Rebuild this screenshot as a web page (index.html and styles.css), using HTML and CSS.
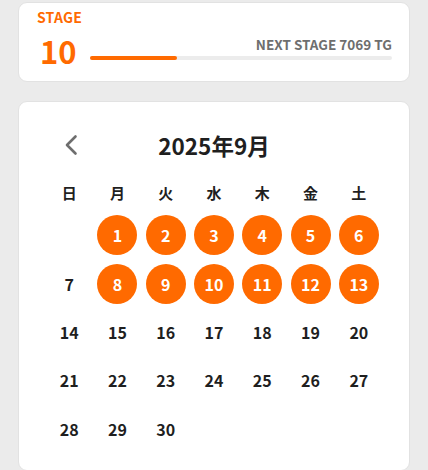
FILE: index.html
```html
<!DOCTYPE html>
<html lang="ja">
<head>
<meta charset="utf-8">
<link rel="stylesheet" href="styles.css">
</head>
<body>
<div class="page">
  <section class="card stage-card">
    <div class="stage-label">STAGE</div>
    <div class="stage-row">
      <div class="stage-num">10</div>
      <div class="stage-progress">
        <div class="next">NEXT STAGE 7069 TG</div>
        <div class="bar"><div class="fill" style="width:29%"></div></div>
      </div>
    </div>
  </section>
  <section class="card cal-card">
    <div class="cal-head">
      <button class="prev" aria-label="前の月">
        <svg width="14" height="22" viewBox="0 0 14 22"><polyline points="11.5,2.5 3,11 11.5,19.5" fill="none" stroke="#6e6e6e" stroke-width="2.6" stroke-linecap="round" stroke-linejoin="round"/></svg>
      </button>
      <div class="title">2025年9月</div>
    </div>
    <div class="grid week">
      <div>日</div><div>月</div><div>火</div><div>水</div><div>木</div><div>金</div><div>土</div>
    </div>
    <div class="grid days">
      <div class="day"></div>
      <div class="day on"><span>1</span></div>
      <div class="day on"><span>2</span></div>
      <div class="day on"><span>3</span></div>
      <div class="day on"><span>4</span></div>
      <div class="day on"><span>5</span></div>
      <div class="day on"><span>6</span></div>
      <div class="day"><span>7</span></div>
      <div class="day on"><span>8</span></div>
      <div class="day on"><span>9</span></div>
      <div class="day on"><span>10</span></div>
      <div class="day on"><span>11</span></div>
      <div class="day on"><span>12</span></div>
      <div class="day on"><span>13</span></div>
      <div class="day"><span>14</span></div>
      <div class="day"><span>15</span></div>
      <div class="day"><span>16</span></div>
      <div class="day"><span>17</span></div>
      <div class="day"><span>18</span></div>
      <div class="day"><span>19</span></div>
      <div class="day"><span>20</span></div>
      <div class="day"><span>21</span></div>
      <div class="day"><span>22</span></div>
      <div class="day"><span>23</span></div>
      <div class="day"><span>24</span></div>
      <div class="day"><span>25</span></div>
      <div class="day"><span>26</span></div>
      <div class="day"><span>27</span></div>
      <div class="day"><span>28</span></div>
      <div class="day"><span>29</span></div>
      <div class="day"><span>30</span></div>
    </div>
  </section>
</div>
</body>
</html>
```
FILE: styles.css
```css
* { box-sizing: border-box; }
html, body { margin: 0; padding: 0; }
body {
  background: #ebebeb;
  font-family: "Noto Sans CJK JP", "Noto Sans", sans-serif;
  color: #1f1f1f;
  width: 428px;
  height: 470px;
  overflow: hidden;
}
.page {
  padding: 2px 18px 0;
  display: flex;
  flex-direction: column;
  gap: 19px;
}
.card {
  background: #fff;
  border-radius: 9px;
  border: 1px solid #e2e2e2;
}
.stage-card {
  height: 80px;
  padding: 3.5px 17px 0 18px;
}
.stage-label {
  color: #ff6a00;
  font-weight: 700;
  font-size: 14px;
  line-height: 20px;
  letter-spacing: 0.2px;
}
.stage-row {
  display: flex;
  align-items: flex-end;
  gap: 13px;
  margin-top: 6.7px;
}
.stage-num {
  color: #ff6a00;
  font-weight: 700;
  font-size: 31px;
  line-height: 36px;
  padding-left: 3px;
}
.stage-progress {
  flex: 1;
  display: flex;
  flex-direction: column;
  padding-bottom: 9px;
}
.next {
  text-align: right;
  color: #6e6e6e;
  font-weight: 700;
  font-size: 13.5px;
  line-height: 18px;
  margin-bottom: 3.5px;
}
.bar {
  height: 4px;
  background: #ececec;
  border-radius: 2px;
}
.fill {
  height: 100%;
  background: #ff6a00;
  border-radius: 2px;
}
.cal-card {
  height: 370px;
  padding-top: 23px;
}
.cal-head {
  position: relative;
  height: 40px;
  display: flex;
  align-items: center;
  justify-content: center;
}
.prev {
  position: absolute;
  left: 45px;
  top: 9px;
  border: 0;
  background: none;
  padding: 0;
  width: 14px;
  height: 22px;
}
.prev svg { display: block; }
.title {
  font-weight: 700;
  font-size: 22.5px;
  line-height: 40px;
  color: #1f1f1f;
}
.grid {
  width: 338px;
  margin: 0 auto;
  display: grid;
  grid-template-columns: repeat(7, 1fr);
}
.week {
  margin-top: 13px;
  height: 30px;
  font-weight: 700;
  font-size: 15px;
  line-height: 30px;
  text-align: center;
}
.days {
  margin-top: 3px;
  grid-auto-rows: 48.4px;
}
.day {
  display: flex;
  align-items: center;
  justify-content: center;
}
.day span {
  width: 40px;
  height: 40px;
  border-radius: 50%;
  display: flex;
  align-items: center;
  justify-content: center;
  font-weight: 700;
  font-size: 16px;
  line-height: 1;
  color: #1f1f1f;
}
.day.on span {
  background: #ff6a00;
  color: #fff;
}
```
